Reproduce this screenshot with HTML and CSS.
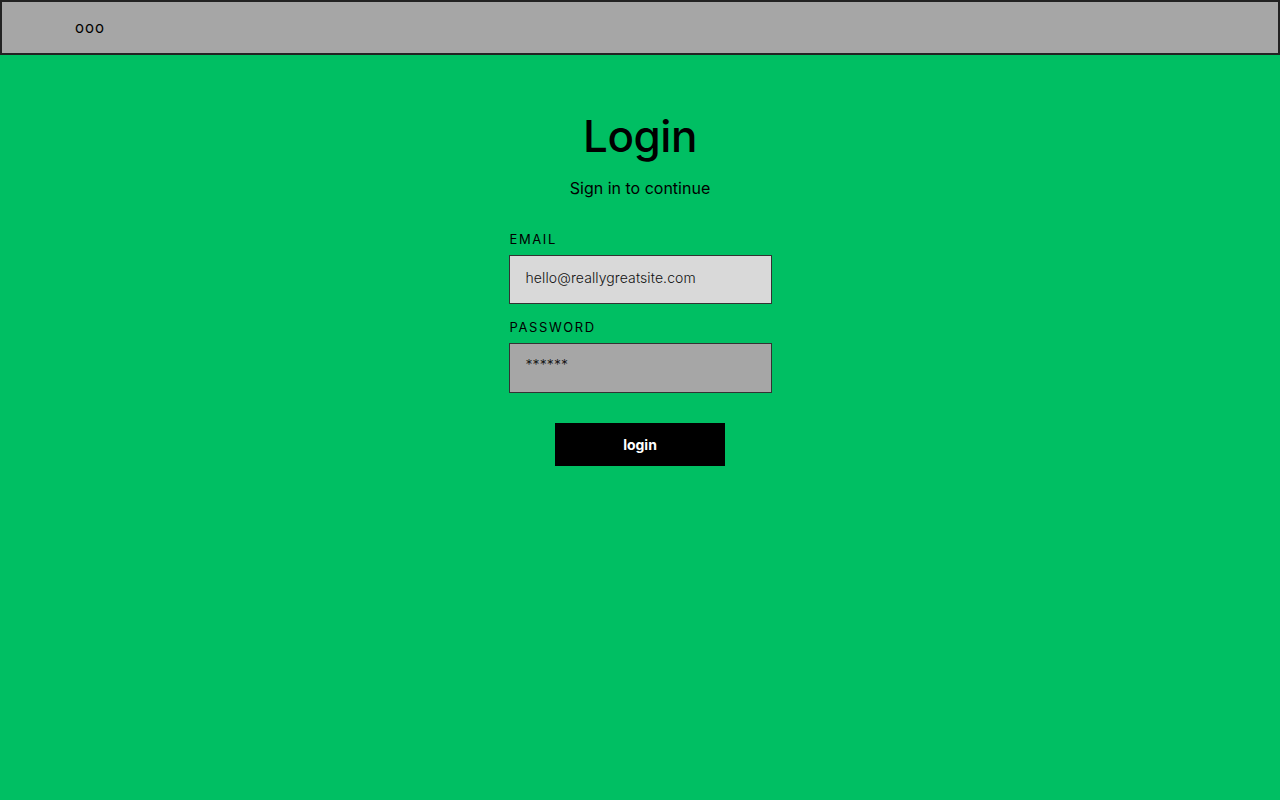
FILE: index.html
```html
<!DOCTYPE html>
<html lang="en">
<head>
<meta charset="utf-8">
<title>Login</title>
<link rel="stylesheet" href="styles.css">
</head>
<body>
<header class="topbar">
  <span class="dots">ooo</span>
</header>
<main class="page">
  <h1 class="title">Login</h1>
  <p class="subtitle">Sign in to continue</p>
  <form class="form">
    <label class="label">EMAIL</label>
    <div class="field field-light">hello@reallygreatsite.com</div>
    <label class="label label-2">PASSWORD</label>
    <div class="field field-dark">******</div>
    <button type="button" class="btn">login</button>
  </form>
</main>
</body>
</html>
```

FILE: styles.css
```css
* { box-sizing: border-box; }
html, body { margin: 0; padding: 0; height: 100%; }
body {
  background: #00bf63;
  font-family: "Inter", "Noto Sans", sans-serif;
  color: #000;
}
.topbar {
  height: 55px;
  background: #a6a6a6;
  border: 2px solid #222;
  display: flex;
  align-items: center;
  padding-left: 73px;
}
.dots {
  font-family: "Inter", sans-serif;
  font-size: 15px;
  letter-spacing: 1px;
  line-height: 1;
  margin-top: -1px;
}
.page {
  display: flex;
  flex-direction: column;
  align-items: center;
}
.title {
  margin: 52px 0 0;
  font-size: 44px;
  font-weight: 500;
  line-height: 58px;
  letter-spacing: -0.5px;
}
.subtitle {
  margin: 13px 0 0;
  font-size: 16px;
  line-height: 20px;
}
.form {
  width: 263px;
  margin-top: 33px;
  display: flex;
  flex-direction: column;
}
.label {
  font-size: 13px;
  letter-spacing: 1.6px;
  line-height: 16px;
  margin-left: 1px;
}
.label-2 { margin-top: 15px; }
.field {
  margin-top: 8px;
  border: 1px solid #333;
  padding: 13px 16px 0;
  font-size: 14px;
  font-weight: 300;
  color: #111;
  letter-spacing: 0.1px;
}
.field-light {
  height: 49px;
  background: #d9d9d9;
}
.field-dark {
  height: 50px;
  background: #a6a6a6;
  padding-top: 12px;
}
.btn {
  align-self: center;
  margin-top: 30px;
  width: 170px;
  height: 43px;
  background: #000;
  color: #fff;
  border: none;
  font-family: "Inter", sans-serif;
  font-size: 14px;
  font-weight: 700;
  cursor: pointer;
}
```
